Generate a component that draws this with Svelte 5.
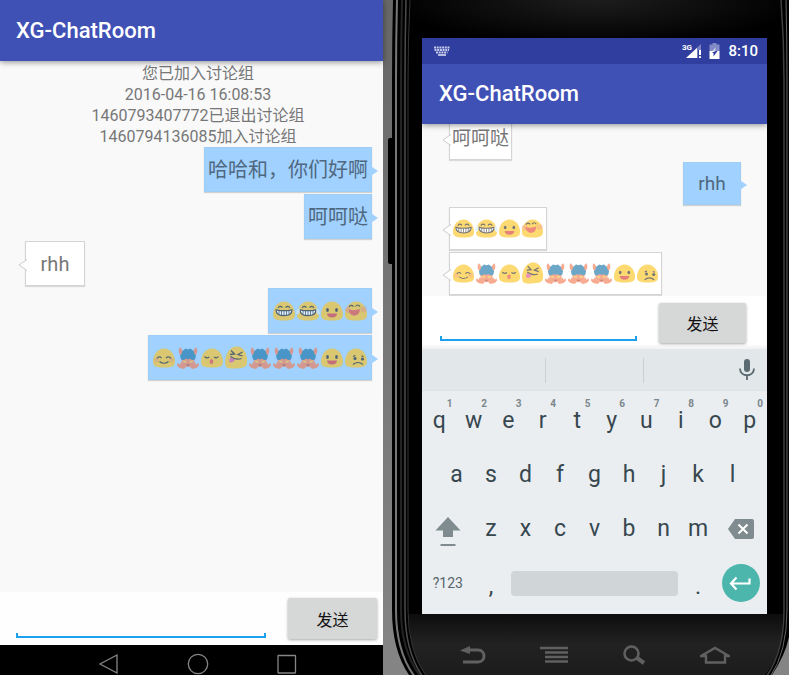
<script>
  const notices = [
    '您已加入讨论组',
    '2016-04-16 16:08:53',
    '1460793407772已退出讨论组',
    '1460794136085加入讨论组'
  ];
  const laughs = ['grin', 'tears', 'open', 'laugh'];
  const crowd = ['smile', 'ogre', 'kiss', 'wink', 'ogre', 'ogre', 'ogre', 'open', 'sad'];

  const mine = [
    { side: 'out', text: '哈哈和，你们好啊' },
    { side: 'out', text: '呵呵哒' },
    { side: 'in', text: 'rhh' },
    { side: 'out', emoji: laughs },
    { side: 'out', emoji: crowd }
  ];
  const theirs = [
    { side: 'in', text: '呵呵哒' },
    { side: 'out', text: 'rhh' },
    { side: 'in', emoji: laughs },
    { side: 'in', emoji: crowd }
  ];
  const top = [...'qwertyuiop'];
  const home = [...'asdfghjkl'];
  const bottom = [...'zxcvbnm'];

  let leftDraft = $state('');
  let rightDraft = $state('');
</script>

{#snippet face(kind)}
  <svg class="emoji" viewBox="0 0 24 24" aria-hidden="true">
    {#if kind === 'ogre'}
      <path fill="#f4794f" d="M3.500 1.200c2 1 2.600 2.600 3.300 4.200h10.400c.7-1.600 1.300-3.200 3.300-4.200 1.400 3.600.8 6.600-1.500 8.300l-1 7.500c-1 3-3 4-6 4s-5-1-6-4L5 9.500C2.700 7.800 2.100 4.800 3.500 1.200z"/>
      <path fill="#1472a8" d="M6.500 5 9.500 2.500l2.500 1 2.500-1L17.500 5l1 3 1.500 1.500-1 4-3 .5-2-1.500-2 1-2-1L8 14l-3-.5-1-4L5.500 8z"/>
      <path fill="#f4794f" d="m1.500 17 2 1.500L5 16l2 2 3 3-2 2-4.500-1L1 19.500zM22.500 17l-2 1.500L19 16l-2 2-3 3 2 2 4.500-1L23 19.500z"/>
      <path fill="#f9c13c" d="m7 14 4 1.500-1 1.200-2.500-.5zm10 0-4 1.500 1 1.200 2.500-.5z"/>
      <path fill="#963a32" d="M9.500 18.500h5L12 20z"/>
    {:else}
      <path fill="#fcc21b" d={kind === 'wink'
        ? 'M11.500 .5C4 2 1 10 1.200 17.500c.1 4 2.300 5.500 9.800 5 8-.3 11.500-1.500 12-5.500C23.800 9.500 20.500-.5 11.500 .5z'
        : 'M12 2.500C5 2.500 1 9.500 1 15.500 1 20 3.500 21.500 12 21.500s11-1.500 11-6C23 9.500 19 2.500 12 2.500z'}/>
      {#if kind === 'grin' || kind === 'tears'}
        <path fill="none" stroke="#222" stroke-width="1.200" d="M6 9q2-3 4.500-.3M13.500 8.700Q16 6 18 9"/>
        <path fill="#fff" stroke="#222" stroke-width="1.200" d="M4 10.800q8 1.800 16 0c0 4-3 5.900-8 5.900s-8-1.900-8-5.900z"/>
        <path fill="none" stroke="#222" stroke-width=".8" d="M7 11.500v4M9.500 12v4.500M12 12v4.500M14.500 12v4.500M17 11.500v4"/>
        {#if kind === 'tears'}
          <path fill="#d4ecfb" d="M3.500 9C0 10.500-.5 14 1 15.500 3 16 4 13 3.500 9zm17 0c3.500 1.500 4 5 2.500 6.500-2 .5-3-2.500-2.500-6.500z"/>
        {/if}
      {:else if kind === 'open'}
        <ellipse cx="7.500" cy="11" rx="1.400" ry="1.900" fill="#222"/>
        <ellipse cx="16.500" cy="11" rx="1.400" ry="1.900" fill="#222"/>
        <path fill="#d8342b" d="M7 14.500h10c0 2.500-2 4-5 4s-5-1.500-5-4z"/>
      {:else if kind === 'laugh'}
        <circle cx="4" cy="11" r="3" fill="#f5844c" opacity=".6"/>
        <circle cx="19.500" cy="10.500" r="3" fill="#f5844c" opacity=".6"/>
        <path fill="none" stroke="#222" stroke-width="1.200" d="M5 8q2-3 4.500-.3M11.500 7.500Q13.500 4.500 16 7.500"/>
        <path fill="#e8432f" d="M4.500 10.500q6 1.500 11.500-.5c-.3 4.500-2.500 6.500-5.500 6.500s-5.500-2-6-6z"/>
      {:else if kind === 'smile'}
        <circle cx="4.500" cy="14" r="2.500" fill="#f5844c" opacity=".5"/>
        <circle cx="19.500" cy="14" r="2.500" fill="#f5844c" opacity=".5"/>
        <path fill="none" stroke="#222" stroke-width="1.200" d="M5 12.500q2-3 4.500-.3M14 12.200q2.500-2.700 5 .3M7.500 15.500q4.500 3.500 9 0"/>
      {:else if kind === 'kiss'}
        <path fill="none" stroke="#222" stroke-width="1.200" d="M4.500 10.500q2.500 2.500 4.800.5M14 11q2.500 2 4.500-.5"/>
        <ellipse cx="11.500" cy="15.500" rx="1.800" ry="2.500" fill="#e8432f"/>
      {:else if kind === 'wink'}
        <path fill="none" stroke="#222" stroke-width="1.300" d="m7 4.500 3.500 3.500L6 8.500M18.500 6 14 8.500l4.500 1.500M6.500 10.500q5 4 11 2"/>
        <path fill="#d94f91" d="M6.500 11.500c2 1.500 3 1.500 4.500 1.500-.5 2.500-2.500 4-4.500 3.500s-1-3.500 0-5z"/>
      {:else}
        <circle cx="11" cy="12.500" r="1.600" fill="#222"/>
        <circle cx="18.500" cy="13" r="1.600" fill="#222"/>
        <path fill="none" stroke="#222" stroke-width="1.200" d="m9 10.500 2.500-1M17.500 9.800l2 1M9 18.500q5-4 10 0"/>
      {/if}
    {/if}
  </svg>
{/snippet}

{#snippet bubble(message)}
  <li class="bubble {message.side}">
    {#if message.text}
      <span>{message.text}</span>
    {:else}
      <span class="faces">
        {#each message.emoji as kind}{@render face(kind)}{/each}
      </span>
    {/if}
    <svg class="tail" viewBox="0 0 9 12" aria-hidden="true"><path d="M9 .5 1 6l8 5.500"/></svg>
  </li>
{/snippet}

<main>
  <section class="phone left">
    <header class="appbar"><h1>XG-ChatRoom</h1></header>
    <div class="chat">
      <div class="notices">
        {#each notices as line}<p>{line}</p>{/each}
      </div>
      <ul>{#each mine as message}{@render bubble(message)}{/each}</ul>
    </div>
    <form class="composer" onsubmit={(e) => e.preventDefault()}>
      <input type="text" aria-label="消息" bind:value={leftDraft} />
      <button class="send">发送</button>
    </form>
    <nav class="softkeys">
      <button aria-label="返回"><svg viewBox="0 0 22 22"><path d="M19 2v18L2 11z"/></svg></button>
      <button aria-label="主页"><svg viewBox="0 0 22 22"><circle cx="11" cy="11" r="9.700"/></svg></button>
      <button aria-label="最近"><svg viewBox="0 0 22 22"><rect x="2" y="2.500" width="17.500" height="17.500" rx=".5"/></svg></button>
    </nav>
  </section>

  <section class="device">
    <svg class="shell" viewBox="0 0 406 675" preserveAspectRatio="none" aria-hidden="true">
      <defs>
        <linearGradient id="desk" x1="0" y1="0" x2="0" y2="1">
          <stop offset="0" stop-color="#686868"/><stop offset="1" stop-color="#858585"/>
        </linearGradient>
        <radialGradient id="sheen" cx=".5" cy="0" r=".55" gradientTransform="matrix(1 0 0 .12 0 0)">
          <stop offset="0" stop-color="#1d1d1d"/><stop offset="1" stop-color="#000"/>
        </radialGradient>
        <linearGradient id="chin" x1="0" y1="0" x2="0" y2="1">
          <stop offset="0" stop-color="#0d0d0d"/><stop offset=".5" stop-color="#222"/><stop offset="1" stop-color="#1c1c1c"/>
        </linearGradient>
      </defs>
      <rect width="406" height="675" fill="url(#desk)"/>
      <path d="M10 0Q9 40 9 80V610q0 40 17 65h363q16-24 18-45V0z"/>
      <rect x="5" y="138" width="7" height="126" rx="2"/>
      <path d="M28 0Q25 25 25 70V610q0 45 17 65h340q18-24 18-65V70q0-45-3-70z" fill="url(#sheen)"/>
      <path d="M26 614h374q-1 42-18 61H42q-16-22-16-61z" fill="url(#chin)"/>
      <g fill="none">
        <path stroke="#777" stroke-width="2" d="M14 0q-1 40-1 80V610q0 42 19 67"/>
        <path stroke="#242424" stroke-width="2" d="M19 0q-1 40-1 80V610q0 40 19 66"/>
        <path stroke="#4c4c4c" stroke-width="1.500" d="M23 0q-1 40-1 80V610q0 42 18 67"/>
        <path stroke="#333" d="M27 0q-2 40-2 80V610q0 42 19 67"/>
        <path stroke="#3f3f3f" stroke-width="1.500" d="M398 0q3 40 3 80V610q0 42-18 67"/>
        <path stroke="#666" d="M403 0q1 40 1 80V610q0 42-17 67"/>
      </g>
    </svg>

    <div class="phone right">
      <div class="status">
        <svg class="kbd" viewBox="0 0 16 10" aria-label="键盘"><path d="M0 1.500h15.500M.5 4h14.500M2 6.500h11.500" stroke-dasharray="2 .7"/><path d="M4 9h8"/></svg>
        <svg class="signal" viewBox="0 0 20 16"><path fill="#fff" fill-opacity=".35" d="M19 1v6h-3v8H4z"/><path fill="#fff" d="M4 15 15 5v10zM17 7h2v5h-2zM17 13.200h2V15h-2z"/><text x="0" y="7">3G</text></svg>
        <svg class="battery" viewBox="0 0 11 16"><path fill="#fff" fill-opacity=".4" d="M3.500 0h4v1.500h3V8H.5V1.500h3z"/><path fill="#fff" d="M.5 8h10v8H.5z"/><path fill="#303f9f" d="M6.500 8h2L4.500 13.500V10h-2L6.500 8z"/><path fill="#fff" fill-opacity=".6" d="M6.500 4.500V8h-3z"/></svg>
        <time>8:10</time>
      </div>
      <header class="appbar"><h1>XG-ChatRoom</h1></header>
      <div class="chat">
        <ul>{#each theirs as message}{@render bubble(message)}{/each}</ul>
      </div>
      <form class="composer" onsubmit={(e) => e.preventDefault()}>
        <input type="text" aria-label="消息" bind:value={rightDraft} />
        <button class="send">发送</button>
      </form>
      <div class="suggest">
        <span></span><span></span>
        <button aria-label="语音输入">
          <svg viewBox="0 0 16 22"><rect x="5" y="0" width="6" height="13" rx="3" fill="#5b6970"/><path d="M1 9.500c0 9 14 9 14 0M8 16v5" fill="none" stroke="#5b6970" stroke-width="1.800"/></svg>
        </button>
      </div>
      <div class="keys">
        <div class="row">
          {#each top as key, i}<button class="key">{key}<small>{(i + 1) % 10}</small></button>{/each}
        </div>
        <div class="row home">
          {#each home as key}<button class="key">{key}</button>{/each}
        </div>
        <div class="row">
          <button class="key wide" aria-label="Shift">
            <svg class="shift" viewBox="0 0 26 32" fill="#7f8b8f"><path d="M13 1 .5 14.500H8V21h10v-6.500h7.500zM5.500 28h15v2h-15z"/></svg>
          </button>
          {#each bottom as key}<button class="key">{key}</button>{/each}
          <button class="key wide" aria-label="删除">
            <svg class="delete" viewBox="0 0 26 20"><path fill="#7f8b8f" d="M7 0h17q2 0 2 2v16q0 2-2 2H7L0 10z"/><path d="m10.500 5.500 9 9m0-9-9 9" stroke="#fff" stroke-width="2"/></svg>
          </button>
        </div>
        <div class="row">
          <button class="key wide mode">?123</button>
          <button class="key mark">,</button>
          <button class="key space" aria-label="空格"><i></i></button>
          <button class="key mark">.</button>
          <button class="key wide" aria-label="换行">
            <svg class="enter" viewBox="0 0 38 38"><circle cx="19" cy="19" r="19" fill="#4db6ac"/><path d="M27.500 14.500v5H10M14.500 13.500 9 19.500l5.500 6" fill="none" stroke="#fff" stroke-width="2.200"/></svg>
          </button>
        </div>
      </div>
    </div>

    <nav class="hardkeys">
      <button aria-label="返回"><svg viewBox="0 0 30 20"><path d="M8 5h12c8 0 8 12 0 12H5" stroke-width="3"/><path d="M12 1v8L2 5.500z" fill="#606060" stroke="none"/></svg></button>
      <button aria-label="菜单"><svg viewBox="0 0 30 20"><path d="M1 3h28M6 7.500h23M6 12h23M6 16.500h23" stroke-width="2.400"/></svg></button>
      <button aria-label="搜索"><svg viewBox="0 0 30 20"><circle cx="12.500" cy="8.500" r="7" stroke-width="2.600"/><path d="m18 13 7 5" stroke-width="4"/></svg></button>
      <button aria-label="主页"><svg viewBox="0 0 30 20"><path d="M1 11 15 3l14 8h-4v6.500H6V11z" stroke-width="2.400"/></svg></button>
    </nav>
  </section>
</main>

<style>
  :global(body) { margin: 0; }
  main {
    display: grid;
    grid-template-columns: minmax(0, 383fr) minmax(0, 406fr);
    min-height: 100vh;
    overflow: hidden;
    font-family: Roboto, "Noto Sans CJK SC", sans-serif;
    color: #777;
  }
  h1, p, ul { margin: 0; padding: 0; }
  ul { list-style: none; }
  button { border: 0; padding: 0; background: none; font: inherit; color: inherit; cursor: pointer; }
  svg { display: block; }

  .phone { display: flex; flex-direction: column; min-width: 0; }
  .left { --size: 20px; --face: 24px; --bubble: 45px; --rim: #d4d4d8; }
  .right { --size: 19px; --face: 23px; --bubble: 43px; --rim: #d4d4d4; }

  .appbar {
    position: relative;
    z-index: 1;
    display: flex;
    align-items: center;
    height: 61px;
    padding: 0 16px;
    background: #3f51b5;
    box-shadow: 0 1px 6px rgb(0 0 0 / 45%);
  }
  .right .appbar { height: 60px; padding: 0 17px; clip-path: inset(0 0 -12px 0); }
  h1 { color: #fff; font-size: 22px; line-height: 28px; font-weight: 500; }

  .chat { flex: 1; background: #f9f9fa; }
  .left .chat { padding: 2px 11px 0 25px; }
  .right .chat {
    display: flex;
    flex: 0 0 172px;
    box-sizing: border-box;
    flex-direction: column;
    justify-content: flex-end;
    padding: 0 26px 1px 27px;
    overflow: hidden;
  }
  .notices { text-align: center; font-size: 16px; line-height: 21px; }
  .left .notices { margin-right: 1px; }
  ul { display: flex; flex-direction: column; gap: 2px; }

  .bubble {
    position: relative;
    display: flex;
    align-items: center;
    justify-content: center;
    box-sizing: border-box;
    height: var(--bubble);
    min-width: 60px;
    padding: 0 3px;
    border: 1px solid var(--rim);
    font-size: var(--size);
    line-height: 28px;
  }
  .right .bubble { min-width: 58px; padding: 0 2px; }
  .in { align-self: flex-start; background: #fff; box-shadow: 0 1px 1px rgb(0 0 0 / 12%); }
  .out { align-self: flex-end; background: #a0d1ff; border-color: #a0cdf5; color: #4f687f; box-shadow: 0 1px 1px rgb(0 0 0 / 16%); }
  .faces { display: flex; opacity: .62; }
  .emoji { width: var(--face); height: var(--face); }
  .tail { position: absolute; top: 50%; right: 100%; width: 9px; height: 12px; margin: -5px -1px 0 0; fill: #fff; stroke: #ccc; }
  .out .tail { right: auto; left: 100%; margin: -5px 0 0 -1px; fill: #a0d1ff; stroke: none; transform: scaleX(-1); }

  .composer { display: flex; gap: 22px; padding: 6px 6px 6px 16px; background: #fefefe; }
  .right .composer { padding: 7px 21px 6px 18px; background: #fff; box-shadow: inset 0 -3px 3px rgb(0 0 0 / 5%); }
  input {
    flex: 1;
    width: 0;
    min-width: 0;
    height: 40px;
    box-sizing: border-box;
    padding: 0 4px;
    border: 0;
    outline: 0;
    font: inherit;
    font-size: 18px;
    background:
      linear-gradient(#1ea0f0, #1ea0f0) left bottom / 100% 2px no-repeat,
      linear-gradient(#1ea0f0, #1ea0f0) left bottom / 2px 5px no-repeat,
      linear-gradient(#1ea0f0, #1ea0f0) right bottom / 2px 5px no-repeat;
  }
  .right input { height: 38px; }
  .send {
    width: 89px;
    height: 41px;
    border-radius: 2px;
    background: #d6d7d7;
    color: #111;
    font-size: 16px;
    box-shadow: 0 1px 3px rgb(0 0 0 / 35%);
  }
  .right .send { width: 87px; height: 40px; }

  .softkeys { display: flex; justify-content: center; height: 30px; padding-left: 13px; background: #000; }
  .softkeys button { width: 89px; display: flex; justify-content: center; align-items: flex-end; }
  .softkeys svg { width: 22px; height: 22px; fill: none; stroke: #858585; stroke-width: 1.3; }

  .device { position: relative; display: flex; flex-direction: column; padding: 38px 22px 0 39px; }
  .shell { position: absolute; inset: 0; width: 100%; height: 100%; }
  .right { position: relative; }
  .status { display: flex; align-items: center; height: 26px; padding: 0 9px 0 12px; background: #303f9f; color: #fff; }
  .kbd { width: 16px; height: 10px; margin-right: auto; fill: none; stroke: #c5cae9; stroke-width: 1.8; }
  .signal { width: 20px; height: 16px; margin-right: 7px; overflow: visible; }
  .signal text { fill: #fff; font-size: 8px; font-weight: 700; }
  .battery { width: 11px; height: 16px; margin-right: 8px; }
  time { font-size: 15px; font-weight: 500; }

  .suggest { display: flex; height: 42px; background: #e2e7e9; padding-right: 12px; box-sizing: border-box; border-bottom: 1px solid #dde2e4; }
  .suggest span { flex: 0 0 29%; margin: 9px 0 7px; border-right: 1px solid #cbd1d3; }
  .suggest span:first-child { flex-basis: 37%; }
  .suggest button { display: flex; align-items: center; margin-left: auto; }
  .suggest svg { width: 16px; height: 22px; }

  .keys { padding: 3px 0 4px; background: #eaeef1; color: #37474f; }
  .row { display: flex; height: 54px; }
  .home { padding: 0 5%; }
  .key { position: relative; display: flex; flex: 2 1 0; min-width: 0; align-items: center; justify-content: center; font-size: 23px; line-height: 28px; }
  .wide { flex-grow: 3; }
  .space { flex-grow: 10; }
  .mode { font-size: 14px; color: #56656c; }
  .mark { padding-top: 8px; }
  .key small { position: absolute; top: 4px; right: 4px; font-size: 10px; line-height: 12px; font-weight: 700; color: #7b878c; }
  .space i { width: 100%; height: 25px; margin: 0 3px; border-radius: 4px; background: #d0d5d8; }
  .shift { width: 26px; height: 32px; margin-top: 6px; }
  .delete { width: 26px; height: 20px; }
  .enter { width: 38px; height: 38px; }

  .hardkeys { position: relative; display: flex; flex: 1; padding: 20px 12px 0 11px; }
  .hardkeys button { flex: 1; display: flex; align-items: center; justify-content: center; min-width: 0; }
  .hardkeys svg { width: 30px; height: 20px; fill: none; stroke: #606060; }
</style>
